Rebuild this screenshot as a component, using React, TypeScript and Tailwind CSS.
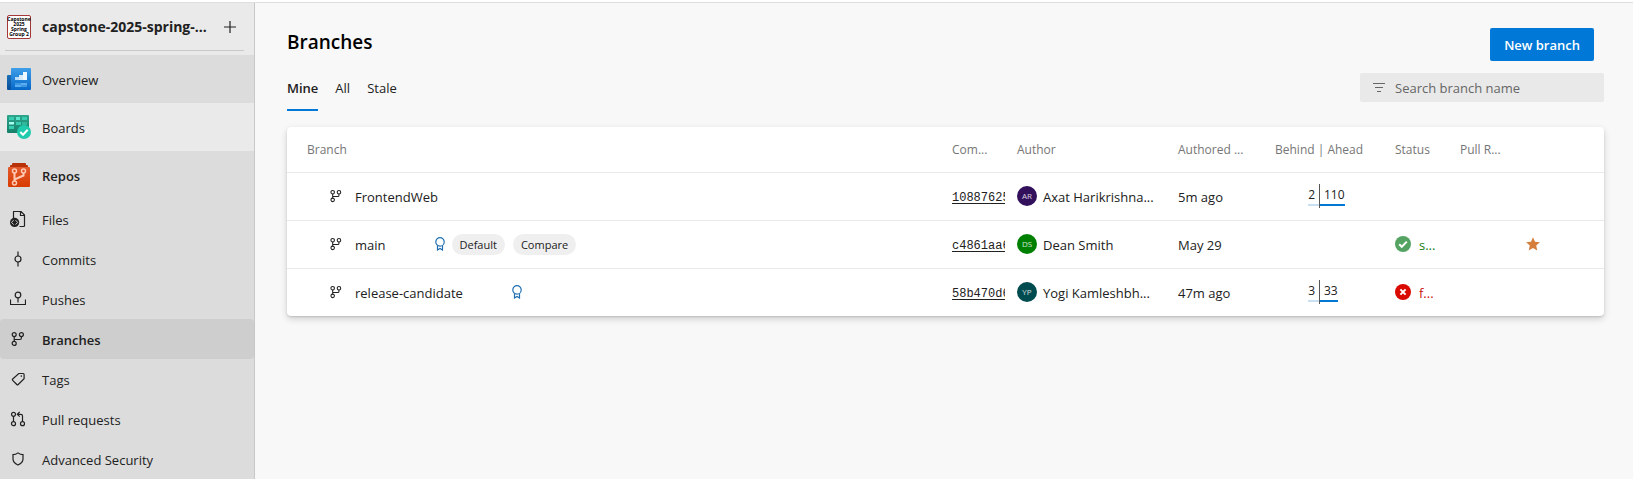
import React from "react";

type IconProps = { className?: string };

const stroke = {
  fill: "none",
  stroke: "currentColor",
  strokeWidth: 1.2,
  viewBox: "0 0 16 16",
  "aria-hidden": true,
} as const;

function BranchIcon({ className = "size-4" }: IconProps) {
  return (
    <svg {...stroke} className={className}>
      <circle cx="4.2" cy="3.6" r="2" />
      <circle cx="11.4" cy="3.6" r="2" />
      <circle cx="4.2" cy="12.4" r="2" />
      <path d="M4.2 5.5v5M11.4 5.5V7q0 1.5-1.5 1.5H4.2" />
    </svg>
  );
}

function FilesIcon() {
  return (
    <svg {...stroke} className="size-4">
      <path d="M3.500 7.500V1q0-.5.5-.5h7l3.500 3.500v10.500q0 1-1 1H9.500M10.500.5V4.500h4" />
      <circle cx="4.600" cy="11.400" r="4.600" fill="currentColor" stroke="none" />
      <path d="M3.600 9.200L1.600 11.400l2 2.200M5.600 9.200l2 2.200-2 2.200" stroke="#dcdcdc" strokeWidth="0.900" />
    </svg>
  );
}

function CommitIcon() {
  return (
    <svg {...stroke} className="size-4">
      <circle cx="8" cy="8" r="3" />
      <path d="M8 .5V5M8 11v4.500" />
    </svg>
  );
}

function PushIcon() {
  return (
    <svg {...stroke} className="size-4">
      <circle cx="8" cy="4" r="2.800" />
      <path d="M8 7v4.500M.5 8.500v5h15v-5" />
    </svg>
  );
}

function TagIcon() {
  return (
    <svg {...stroke} className="size-4">
      <path d="M8.800 2.500h4.300q1 0 1 1v4.200L8.200 13.500q-.7.7-1.400 0L2.700 9.400q-.7-.7 0-1.400z" />
      <circle cx="11.300" cy="5.100" r=".8" fill="currentColor" stroke="none" />
    </svg>
  );
}

function PullRequestIcon() {
  return (
    <svg {...stroke} className="size-4">
      <circle cx="3.500" cy="3.300" r="2" />
      <circle cx="3.500" cy="12.700" r="2" />
      <circle cx="12.500" cy="12.700" r="2" />
      <path d="M3.500 5.200v5.600M12.500 10.800V5q0-1.700-1.700-1.700H7.500M9.700.9L7.300 3.300l2.400 2.400" />
    </svg>
  );
}

function ShieldIcon() {
  return (
    <svg {...stroke} className="size-4">
      <path d="M8 1.900Q10.300 3.700 13 3.700V8q0 3.700-5 6-5-2.300-5-6V3.700Q5.700 3.700 8 1.900z" />
    </svg>
  );
}

function PolicyIcon() {
  return (
    <svg {...stroke} viewBox="0 0 12 14" className="h-3.5 w-3 shrink-0 text-[#1f6fb2]">
      <circle cx="6" cy="4.900" r="4.200" />
      <path d="M3.500 8.500v4.500L6 11.500l2.500 1.500V8.500" />
    </svg>
  );
}

function OverviewIcon() {
  return (
    <svg viewBox="0 0 24 24" className="size-6" aria-hidden="true">
      <defs>
        <linearGradient id="overview-page" x1="0" y1="0" x2="0" y2="1">
          <stop offset="0" stopColor="#3f9fe8" />
          <stop offset="1" stopColor="#0568c8" />
        </linearGradient>
        <linearGradient id="overview-side" x1="0" y1="0" x2="0" y2="1">
          <stop offset="0" stopColor="#1c70b8" />
          <stop offset="1" stopColor="#084f9b" />
        </linearGradient>
      </defs>
      <path d="M0 9q0-1 1-1h4v15H1q-1 0-1-1z" fill="url(#overview-side)" />
      <path d="M4 2q0-1 1-1h18q1 0 1 1v20q0 1-1 1H3q1 0 1-1z" fill="url(#overview-page)" />
      <path d="M8 10h4v3H8z" fill="#b9dcf8" />
      <path d="M12 8h4v5h-4z" fill="#d5ebfb" />
      <path d="M16 5h4v8h-4z" fill="#eef8ff" />
      <path d="M8 18h6v2H8zM14 16h6v2h-6z" fill="#5aaef0" />
      <path d="M8 16h6v2H8zM14 18h6v2h-6z" fill="#3f97e2" />
    </svg>
  );
}

function BoardsIcon() {
  return (
    <svg viewBox="0 0 24 24" className="size-6" aria-hidden="true">
      <defs>
        <linearGradient id="boards-panel" x1="0" y1="0" x2="0" y2="1">
          <stop offset="0" stopColor="#2ea58b" />
          <stop offset="1" stopColor="#168069" />
        </linearGradient>
      </defs>
      <rect width="22" height="18" rx="1" fill="url(#boards-panel)" />
      <path d="M2 2h5v3H2zM15 2h5v3h-5zM9 7h5v3H9zM2 11h5v3H2z" fill="#38cdb0" />
      <path d="M9 2h4v3H9z" fill="#5ce8cf" />
      <path d="M2 7h5v2.500H2z" fill="#a6fff0" />
      <path d="M15 7h5v3h-5z" fill="#2fb89b" />
      <circle cx="17" cy="17" r="7" fill="#1fcbac" />
      <path d="M13.300 17l2.700 2.700 4.700-4.900" fill="none" stroke="#fff" strokeWidth="2" />
    </svg>
  );
}

function ReposIcon() {
  return (
    <svg viewBox="0 0 24 24" className="size-6" aria-hidden="true">
      <defs>
        <linearGradient id="repos-body" x1="0" y1="0" x2="0" y2="1">
          <stop offset="0" stopColor="#e25a2c" />
          <stop offset="1" stopColor="#d83b01" />
        </linearGradient>
      </defs>
      <path d="M6 0h12q1 0 1 1v1h1q1 0 1 1v2H3V3q0-1 1-1h1V1q0-1 1-1z" fill="#b83108" />
      <rect x="1" y="4" width="22" height="20" rx="1" fill="url(#repos-body)" />
      <g fill="none" stroke="#ffc9b4" strokeWidth="1.500">
        <circle cx="7.500" cy="8" r="2" />
        <circle cx="16.500" cy="8" r="2" />
        <circle cx="7.500" cy="20" r="2" />
        <path d="M7.500 10v8M16.500 10v2.500l-9 4" strokeWidth="2" />
      </g>
    </svg>
  );
}

function StatusIcon({ ok }: { ok: boolean }) {
  return (
    <svg viewBox="0 0 16 16" className="size-4 shrink-0" aria-hidden="true">
      <circle cx="8" cy="8" r="8" fill={ok ? "#55a362" : "#da0a00"} />
      <path
        d={ok ? "M4.200 8.200l2.600 2.600 5-5.200" : "M5.400 5.400l5.200 5.200M10.600 5.400l-5.200 5.200"}
        fill="none"
        stroke="#fff"
        strokeWidth="2"
      />
    </svg>
  );
}

const hubs = [
  { label: "Overview", icon: <OverviewIcon />, style: "bg-[#dcdcdc]" },
  { label: "Boards", icon: <BoardsIcon />, style: "" },
  { label: "Repos", icon: <ReposIcon />, style: "bg-[#dcdcdc] font-semibold" },
];

const repoPages = [
  { label: "Files", icon: <FilesIcon /> },
  { label: "Commits", icon: <CommitIcon /> },
  { label: "Pushes", icon: <PushIcon /> },
  { label: "Branches", icon: <BranchIcon />, current: true },
  { label: "Tags", icon: <TagIcon /> },
  { label: "Pull requests", icon: <PullRequestIcon /> },
  { label: "Advanced Security", icon: <ShieldIcon /> },
];

type Branch = {
  name: string;
  commit: string;
  initials: string;
  avatar: string;
  author: string;
  date: string;
  policy?: boolean;
  pills?: string[];
  behind?: number;
  ahead?: number;
  status?: { ok: boolean; text: string };
  starred?: boolean;
};

const branches: Branch[] = [
  {
    name: "FrontendWeb",
    commit: "10887625",
    initials: "AR",
    avatar: "bg-[#32105c]",
    author: "Axat Harikrishna...",
    date: "5m ago",
    behind: 2,
    ahead: 110,
  },
  {
    name: "main",
    commit: "c4861aa6",
    initials: "DS",
    avatar: "bg-[#008000]",
    author: "Dean Smith",
    date: "May 29",
    policy: true,
    pills: ["Default", "Compare"],
    status: { ok: true, text: "s..." },
    starred: true,
  },
  {
    name: "release-candidate",
    commit: "58b470d6",
    initials: "YP",
    avatar: "bg-[#004b50]",
    author: "Yogi Kamleshbh...",
    date: "47m ago",
    policy: true,
    behind: 3,
    ahead: 33,
    status: { ok: false, text: "f..." },
  },
];

function Sidebar() {
  return (
    <nav className="flex w-[255px] shrink-0 flex-col border-r border-[#c8c8c8] bg-[#eaeaea]" aria-label="Project">
      <div className="mb-1 ml-[5px] mr-2.5 flex h-12 items-center border-b border-[#c8c8c8] pl-0.5">
        <span className="flex size-6 shrink-0 flex-col items-center justify-center rounded-xs border border-[#a4373a] bg-white text-[5px]/[5px] font-bold text-black">
          <span>Capstone</span>
          <span>2025</span>
          <span>Spring</span>
          <span>Group 2</span>
        </span>
        <a href="#project" className="ml-[11px] flex-1 whitespace-nowrap text-sm font-bold">
          capstone-2025-spring-...
        </a>
        <button aria-label="Add" className="mr-2 size-3 shrink-0">
          <svg viewBox="0 0 12 12" className="size-3" stroke="#222" strokeWidth="1.200">
            <path d="M6 0v12M0 6h12" />
          </svg>
        </button>
      </div>
      {hubs.map((h) => (
        <a key={h.label} href="#hub" className={`flex h-12 shrink-0 items-center gap-[11px] pl-[7px] ${h.style}`}>
          {h.icon}
          <span className="pt-0.5">{h.label}</span>
        </a>
      ))}
      <div className="flex-1 bg-[#dcdcdc]">
        {repoPages.map((p) => (
          <a
            key={p.label}
            href="#page"
            className={`flex h-10 items-center gap-4 pl-2.5 ${p.current ? "rounded-sm bg-[#cecece] font-semibold" : ""}`}
          >
            {p.icon}
            <span className="pt-0.5">{p.label}</span>
          </a>
        ))}
      </div>
    </nav>
  );
}

function BranchRow({ b }: { b: Branch }) {
  return (
    <tr className="h-12 border-t border-[#eaeaea]">
      <td className="pl-[42px]">
        <div className="flex items-center">
          <BranchIcon className="size-3.5 shrink-0" />
          <a href="#branch" className="ml-3 pt-0.5">{b.name}</a>
          {b.policy && <span className="ml-12"><PolicyIcon /></span>}
          {b.pills && (
            <span className="ml-1.5 flex gap-2">
              {b.pills.map((p) => (
                <span key={p} className="rounded-full bg-[#efefef] px-2 text-[11px]/[21px]">{p}</span>
              ))}
            </span>
          )}
        </div>
      </td>
      <td className="pr-3">
        <div className="overflow-hidden pt-0.5">
          <a href="#commit" className="font-['Liberation_Mono',monospace] text-xs/5 underline underline-offset-2">{b.commit}</a>
        </div>
      </td>
      <td>
        <div className="flex items-center gap-1.5 whitespace-nowrap">
          <span className={`flex size-5 shrink-0 items-center justify-center rounded-full text-[8px] text-white/80 ${b.avatar}`}>
            {b.initials}
          </span>
          <span className="pt-0.5">{b.author}</span>
        </div>
      </td>
      <td className="pt-0.5">{b.date}</td>
      <td>
        {b.ahead !== undefined && (
          <div className="flex items-center text-xs/[18px]">
            <span className="flex w-11 justify-end">
              <span className="border-b-2 border-[#c7e0f4] pr-1">{b.behind}</span>
            </span>
            <span className="h-6 w-px bg-[#555]" />
            <span className="border-b-2 border-[#0078d4] pl-1">{b.ahead}</span>
          </div>
        )}
      </td>
      <td>
        {b.status && (
          <div className={`flex items-center gap-2 ${b.status.ok ? "text-[#107c10]" : "text-[#cd1010]"}`}>
            <StatusIcon ok={b.status.ok} />
            <span className="pt-0.5">{b.status.text}</span>
          </div>
        )}
      </td>
      <td />
      <td>
        {b.starred && (
          <button aria-label="Remove from favorites" className="block">
            <svg viewBox="0 0 14 14" className="size-3.5" fill="#d67f3c">
              <path d="M7 .3l2 4.500 4.900.5-3.700 3.300 1.100 4.900L7 11l-4.300 2.500 1.100-4.900L.1 5.300 5 4.800z" />
            </svg>
          </button>
        )}
      </td>
    </tr>
  );
}

export default function App() {
  return (
    <div className="flex min-h-screen flex-col bg-white pt-0.5 font-['Open_Sans','Noto_Sans',sans-serif] text-[13px]/5 text-[#212121]">
      <div className="flex flex-1 border-t border-[#dedede]">
        <Sidebar />
        <main className="min-w-0 flex-1 bg-[#f8f8f8] px-8 pr-[29px]">
          <header className="flex items-start justify-between pr-2.5 pt-[25px]">
            <h1 className="text-[19px]/7 font-semibold text-black">Branches</h1>
            <button className="h-[33px] rounded-xs bg-[#0078d7] px-3.5 font-semibold text-white">New branch</button>
          </header>
          <div className="flex items-start justify-between pt-3">
            <div role="tablist" className="flex gap-[17px]">
              <button role="tab" aria-selected="true" className="h-[38px] border-b-2 border-[#0078d7] pb-1.5 font-semibold">
                Mine
              </button>
              <button role="tab" aria-selected="false" className="h-[38px] pb-2">All</button>
              <button role="tab" aria-selected="false" className="h-[38px] pb-2">Stale</button>
            </div>
            <label className="flex h-[29px] w-[244px] items-center gap-2.5 rounded-xs bg-[#e9e9e9] pl-[13px] text-[#666]">
              <svg viewBox="0 0 12 10" className="h-2.5 w-3 shrink-0" stroke="currentColor">
                <path d="M0 .5h12M2 4.500h8M4 8.500h4" />
              </svg>
              <input
                aria-label="Search branch name"
                placeholder="Search branch name"
                className="min-w-0 flex-1 bg-transparent outline-none placeholder:text-[#666]"
              />
            </label>
          </div>
          <section className="mt-4 overflow-hidden rounded-sm bg-white shadow-[0_3px_7px_rgba(0,0,0,0.16),0_1px_2px_rgba(0,0,0,0.13)]">
            <table className="w-full table-fixed border-collapse text-left">
              <colgroup>
                <col />
                <col className="w-[65px]" />
                <col className="w-[161px]" />
                <col className="w-[97px]" />
                <col className="w-[120px]" />
                <col className="w-[65px]" />
                <col className="w-[66px]" />
                <col className="w-[78px]" />
              </colgroup>
              <thead>
                <tr className="h-[45px] whitespace-nowrap text-xs text-[#767676] *:pt-0.5 *:font-medium">
                  <th className="pl-5">Branch</th>
                  <th>Com...</th>
                  <th>Author</th>
                  <th>Authored ...</th>
                  <th>Behind | Ahead</th>
                  <th>Status</th>
                  <th>Pull R...</th>
                  <th aria-label="Favorite" />
                </tr>
              </thead>
              <tbody>
                {branches.map((b) => (
                  <BranchRow key={b.name} b={b} />
                ))}
              </tbody>
            </table>
          </section>
        </main>
      </div>
    </div>
  );
}
